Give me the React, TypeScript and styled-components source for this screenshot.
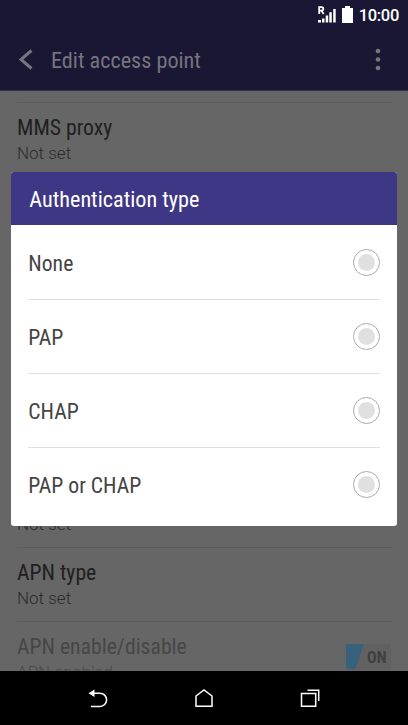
import React from "react";
import styled, { createGlobalStyle } from "styled-components";

const GlobalStyle = createGlobalStyle`
  * { box-sizing: border-box; }
  body { margin: 0; background: #666; overflow: hidden; font-family: Roboto, sans-serif; }
`;

const Screen = styled.div`
  position: relative;
  width: 408px;
  height: 725px;
  display: flex;
  flex-direction: column;
  overflow: hidden;
  background: #666;
`;

const TopArea = styled.header`
  flex: none;
  height: 91px;
  background: #1a1734;
  border-bottom: 1px solid #32304a;
`;

const StatusBar = styled.div`
  height: 30px;
  display: flex;
  justify-content: flex-end;
  align-items: center;
  gap: 6px;
  padding: 0 9px 0 0;
  color: #fff;
`;

const StatusIcon = styled.svg`
  flex: none;
  margin-top: -2px;
`;

const Clock = styled.span`
  font: 500 16.5px/30px Roboto, sans-serif;
  margin-top: 1px;
  letter-spacing: -0.3px;
`;

const AppBar = styled.div`
  height: 60px;
  display: flex;
  align-items: center;
  padding: 0 24px 0 18px;
  color: #76747f;
`;

const Spacer = styled.span`
  flex: 1;
`;

const Condensed = styled.span<{ $color: string; $size?: number }>`
  display: block;
  white-space: nowrap;
  font-family: "Roboto Condensed", Roboto, sans-serif;
  font-stretch: 75%;
  font-size: ${(p) => p.$size ?? 21.7}px;
  line-height: 28px;
  color: ${(p) => p.$color};
`;

const Settings = styled.main`
  flex: 1;
  min-height: 0;
  overflow: hidden;
  padding: 11px 16px 0 17px;
`;

const Setting = styled.section<{ $disabled?: boolean; $skip?: number }>`
  height: 74.17px;
  margin-top: ${(p) => (p.$skip ?? 0) * 74.17}px;
  border-top: 1px solid #5c5c5c;
  display: flex;
  justify-content: space-between;
  padding-top: 11px;
  color: ${(p) => (p.$disabled ? "#4b4b4b" : "#2b2b2b")};
`;

const TitleSlot = styled.div`
  height: 28px;
`;

const Value = styled.span`
  display: block;
  margin-top: -1px;
  font-size: 17px;
  font-weight: 300;
  line-height: 24px;
  white-space: nowrap;
`;

const Toggle = styled.div`
  display: flex;
  width: 45px;
  height: 26px;
  margin: 11px 1px 0 0;
  background: #616161;
`;

const ToggleSlant = styled.span`
  width: 18px;
  height: 25px;
  background: #36627d;
  clip-path: polygon(0 0, 100% 0, 50% 100%, 0 100%);
`;

const ToggleLabel = styled.span`
  width: 27px;
  padding-left: 3px;
  font: 700 16px/28px Roboto, sans-serif;
  font-stretch: 75%;
  color: #404040;
`;

const NavBar = styled.nav`
  flex: none;
  height: 54px;
  background: #000;
  display: flex;
  justify-content: center;
  align-items: center;
  gap: 82px;
`;

const Dialog = styled.div`
  position: absolute;
  left: 11.3px;
  top: 172.3px;
  width: 385.4px;
  height: 353.7px;
  border-radius: 3px;
  overflow: hidden;
  background: #fff;
`;

const DialogHeader = styled.div`
  height: 53px;
  display: flex;
  align-items: center;
  padding: 1px 18px 0;
  background: #3e3785;
`;

const Options = styled.div`
  padding: 0 17px;
`;

const Option = styled.label`
  height: 74px;
  display: flex;
  justify-content: space-between;
  align-items: center;
  padding-top: 2px;
  border-top: 1px solid #dfdfdf;
  &:first-child { border-top-color: transparent; }
`;

const Radio = styled.span`
  width: 27px;
  height: 27px;
  margin-bottom: 3px;
  border: 1px solid #aaa;
  border-radius: 50%;
  display: grid;
  place-items: center;
  &::after {
    content: "";
    width: 17px;
    height: 17px;
    border-radius: 50%;
    background: #e0e0e0;
  }
`;

type SettingItem = { title?: string; value: string; disabled?: boolean; skip?: number };

// `skip` leaves room for the rows that the open dialog covers entirely.
const settings: SettingItem[] = [
  { title: "MMS proxy", value: "Not set" },
  { value: "Not set", skip: 4 },
  { title: "APN type", value: "Not set" },
  { title: "APN enable/disable", value: "APN enabled", disabled: true },
];

const options = ["None", "PAP", "CHAP", "PAP or CHAP"];

export default function App() {
  return (
    <>
      <GlobalStyle />
      <Screen>
        <TopArea>
          <StatusBar>
            <StatusIcon width="18" height="17" viewBox="0 0 18 17" fill="#fff">
              <path d="M0 14h3v2.500H0zM4 12.500h2.500v4H4zM7.700 9.500h2.500v7H7.700zM11.300 6.300h2.500v10.200h-2.500zM15.200 3h2.500v13.500h-2.500z" />
              <path d="M1.200 8V1.200h2.300q1.800 0 1.800 1.700t-1.800 1.700H1.200M3.500 4.800L5.700 8" fill="none" stroke="#fff" strokeWidth="1.800" />
            </StatusIcon>
            <StatusIcon width="11" height="17" viewBox="0 0 11 17" fill="#fff">
              <path d="M3 0h5v2h3v15H0V2h3z" />
            </StatusIcon>
            <Clock>10:00</Clock>
          </StatusBar>
          <AppBar>
            <svg width="33" height="22" viewBox="0 0 33 22" fill="none" stroke="#76747f" strokeWidth="3">
              <path d="M13.500 1.500L3 10.500l10.500 9" />
            </svg>
            <Condensed $color="#76747f" $size={22.2}>Edit access point</Condensed>
            <Spacer />
            <svg width="12" height="24" viewBox="0 0 12 24" fill="#76747f">
              <circle cx="6" cy="3" r="2.300" />
              <circle cx="6" cy="11.500" r="2.300" />
              <circle cx="6" cy="20" r="2.300" />
            </svg>
          </AppBar>
        </TopArea>
        <Settings>
          {settings.map((s, i) => (
            <Setting key={i} $disabled={s.disabled} $skip={s.skip}>
              <div>
                <TitleSlot>
                  {s.title && <Condensed $color={s.disabled ? "#464646" : "#202020"}>{s.title}</Condensed>}
                </TitleSlot>
                <Value>{s.value}</Value>
              </div>
              {s.disabled && (
                <Toggle>
                  <ToggleSlant />
                  <ToggleLabel>ON</ToggleLabel>
                </Toggle>
              )}
            </Setting>
          ))}
        </Settings>
        <NavBar>
          <svg width="24" height="24" viewBox="0 0 24 24" fill="none" stroke="#fff" strokeWidth="1.500">
            <path d="M5 7.200H14a6.500 6.500 0 0 1 0 13.200H5" />
            <path d="M2.500 7.200l6-3.700v7.400z" fill="#fff" stroke="none" />
          </svg>
          <svg width="24" height="24" viewBox="0 0 24 24" fill="none" stroke="#fff" strokeWidth="1.500">
            <path d="M4 20.200V10L12 4l8 6v10.200z" />
          </svg>
          <svg width="24" height="24" viewBox="0 0 24 24" fill="none" stroke="#fff" strokeWidth="1.500">
            <path d="M3.500 7.500h14.200v12.700H3.500z" />
            <path d="M9.500 4.300h11.200V15" />
          </svg>
        </NavBar>
        <Dialog role="dialog" aria-label="Authentication type">
          <DialogHeader>
            <Condensed $color="#fff" $size={22.2}>Authentication type</Condensed>
          </DialogHeader>
          <Options>
            {options.map((o) => (
              <Option key={o}>
                <Condensed $color="#444">{o}</Condensed>
                <Radio />
              </Option>
            ))}
          </Options>
        </Dialog>
      </Screen>
    </>
  );
}
